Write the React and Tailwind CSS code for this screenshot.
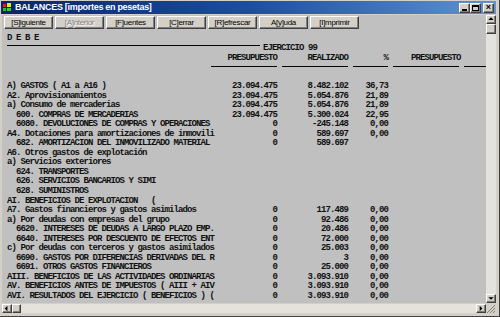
import React from 'react';

const rows = [
  ['A) GASTOS ( A1 a A16 )', '23.094.475', '8.482.102', '36,73'],
  ['A2. Aprovisionamientos', '23.094.475', '5.054.876', '21,89'],
  ['a) Consumo de mercaderias', '23.094.475', '5.054.876', '21,89'],
  ['  600. COMPRAS DE MERCADERIAS', '23.094.475', '5.300.024', '22,95'],
  ['  6080. DEVOLUCIONES DE COMPRAS Y OPERACIONES', '0', '-245.148', '0,00'],
  ['A4. Dotaciones para amortizaciones de inmovili', '0', '589.697', '0,00'],
  ['  682. AMORTIZACION DEL INMOVILIZADO MATERIAL', '0', '589.697', ''],
  ['A6. Otros gastos de explotación', '', '', ''],
  ['a) Servicios exteriores', '', '', ''],
  ['  624. TRANSPORTES', '', '', ''],
  ['  626. SERVICIOS BANCARIOS Y SIMI', '', '', ''],
  ['  628. SUMINISTROS', '', '', ''],
  ['AI. BENEFICIOS DE EXPLOTACION   (', '', '', ''],
  ['A7. Gastos financieros y gastos asimilados', '0', '117.489', '0,00'],
  ['a) Por deudas con empresas del grupo', '0', '92.486', '0,00'],
  ['  6620. INTERESES DE DEUDAS A LARGO PLAZO EMP.', '0', '20.486', '0,00'],
  ['  6640. INTERESES POR DESCUENTO DE EFECTOS ENT', '0', '72.000', '0,00'],
  ['c) Por deudas con terceros y gastos asimilados', '0', '25.003', '0,00'],
  ['  6690. GASTOS POR DIFERENCIAS DERIVADAS DEL R', '0', '3', '0,00'],
  ['  6691. OTROS GASTOS FINANCIEROS', '0', '25.000', '0,00'],
  ['AIII. BENEFICIOS DE LAS ACTIVIDADES ORDINARIAS', '0', '3.093.910', '0,00'],
  ['AV. BENEFICIOS ANTES DE IMPUESTOS ( AIII + AIV', '0', '3.093.910', '0,00'],
  ['AVI. RESULTADOS DEL EJERCICIO ( BENEFICIOS ) (', '0', '3.093.910', '0,00'],
];

const buttons = [
  { label: '[S]iguiente' },
  { label: '[A]nterior', disabled: true },
  { label: '[F]uentes' },
  { label: '[C]errar' },
  { label: '[R]efrescar' },
  { label: 'A[y]uda' },
  { label: '[I]mprimir' },
];

const bevel =
  'bg-[#d4d0c8] border border-t-white border-l-white border-r-[#404040] border-b-[#404040] shadow-[inset_-1px_-1px_0_#808080]';

const Arrow = ({ dir }) => {
  const pts = {
    up: '1.5,5 4.5,2 7.5,5',
    down: '1.5,3 4.5,6 7.5,3',
    left: '5,1.5 2,4.5 5,7.5',
    right: '3,1.5 6,4.5 3,7.5',
  };
  return (
    <svg width="9" height="9" viewBox="0 0 9 9">
      <polygon points={pts[dir]} fill="#000" />
    </svg>
  );
};

const ScrollBtn = ({ dir, className = '' }) => (
  <div className={`${bevel} flex items-center justify-center ${className}`}>
    <Arrow dir={dir} />
  </div>
);

const WinBtn = ({ children }) => (
  <div className={`${bevel} w-[11px] h-[10px] flex items-center justify-center`}>{children}</div>
);

const Row = ({ label, a, b, c }) => (
  <div className="flex h-[9.55px] leading-[9.55px] whitespace-pre">
    <div className="w-[204px] shrink-0">{label}</div>
    <div className="w-[66px] shrink-0 text-right">{a}</div>
    <div className="w-[66px] shrink-0 ml-[5px] text-right">{b}</div>
    <div className="w-[35px] shrink-0 ml-[5px] text-right">{c}</div>
  </div>
);

export default function App() {
  return (
    <div className="w-[500px] h-[317px] bg-[#d4d0c8] flex flex-col pl-[2px] pt-[1px] pr-[3px] pb-[3px] border-r border-b border-[#404040] overflow-hidden">
      {/* title bar */}
      <div className="h-[13px] shrink-0 flex items-center bg-gradient-to-r from-[#0a246a] via-[#1d4e9e] to-[#5f93d4] -ml-[1px] pl-[2px] pr-[2px]">
        <svg width="9" height="9" viewBox="0 0 9 9" className="shrink-0">
          <rect x="0" y="1" width="3" height="3" fill="#e02020" />
          <rect x="0" y="5" width="3" height="3" fill="#20c020" />
          <rect x="4" y="0" width="4" height="4" fill="#f0e020" />
          <rect x="4" y="5" width="4" height="3" fill="#30d030" />
        </svg>
        <span className="ml-[3px] text-white font-bold text-[9px] tracking-[-0.3px] leading-none" style={{ fontFamily: '"Liberation Sans", Arial, sans-serif' }}>
          BALANCES [importes en pesetas]
        </span>
        <div className="ml-auto flex items-center">
          <WinBtn>
            <div className="w-[5px] h-[2px] bg-black mt-[4px]" />
          </WinBtn>
          <WinBtn>
            <div className="w-[7px] h-[6px] border border-black border-t-2" />
          </WinBtn>
          <div className="w-[2px]" />
          <WinBtn>
            <span className="text-[9px] font-bold leading-none text-black" style={{ fontFamily: '"Liberation Sans", Arial, sans-serif' }}>×</span>
          </WinBtn>
        </div>
      </div>

      {/* client area */}
      <div className="flex-1 flex min-h-0 mt-[1px]">
        <div className="flex-1 flex flex-col bg-[#c0c0c0] min-w-0 overflow-hidden">
          {/* toolbar */}
          <div className="h-[15px] shrink-0 flex items-start gap-[2px] pl-[2px] pt-[1px]" style={{ fontFamily: '"Liberation Sans", Arial, sans-serif' }}>
            {buttons.map((btn) => (
              <div
                key={btn.label}
                className={`${bevel} w-[49px] h-[13px] flex items-center justify-center text-[8px] tracking-[-0.3px] leading-none ${
                  btn.disabled ? 'text-[#808080] [text-shadow:1px_1px_0_#fff]' : 'text-black'
                }`}
              >
                {btn.label}
              </div>
            ))}
          </div>

          {/* report */}
          <div
            className="flex-1 pl-[5px] text-[9px] font-bold tracking-[-0.9px] text-[#111] overflow-hidden"
            style={{ fontFamily: '"Liberation Mono", "Courier New", monospace' }}
          >
            <div className="mt-[3.5px] h-[9.5px] leading-[9.5px] whitespace-pre">D E B E</div>
            <div className="flex items-start h-[9.5px] leading-[9.5px] whitespace-pre">
              <div className="w-[253px] h-px bg-black mt-[1.5px] shrink-0" />
              <div className="ml-[3px] mt-[1px]">EJERCICIO 99</div>
            </div>
            <div className="flex mt-[1px] h-[9.5px] leading-[9.5px] whitespace-pre">
              <div className="w-[204px] shrink-0" />
              <div className="w-[66px] shrink-0 text-right">PRESUPUESTO</div>
              <div className="w-[66px] shrink-0 ml-[5px] text-right">REALIZADO</div>
              <div className="w-[35px] shrink-0 ml-[5px] text-right">%</div>
              <div className="w-[66px] shrink-0 ml-[5px] pl-[18px]">PRESUPUESTO</div>
            </div>
            <div className="flex mt-[3px]">
              <div className="w-[204px] shrink-0" />
              <div className="w-[66px] h-px bg-black shrink-0" />
              <div className="w-[66px] h-px bg-black shrink-0 ml-[5px]" />
              <div className="w-[35px] h-px bg-black shrink-0 ml-[5px]" />
              <div className="w-[66px] h-px bg-black shrink-0 ml-[5px]" />
              <div className="w-[66px] h-px bg-black shrink-0 ml-[5px]" />
            </div>
            <div className="mt-[15px]">
              {rows.map(([label, a, b, c], i) => (
                <Row key={i} label={label} a={a} b={b} c={c} />
              ))}
            </div>
          </div>
        </div>

        {/* vertical scrollbar */}
        <div className="w-[10px] shrink-0 flex flex-col bg-[#e4e2dc]">
          <ScrollBtn dir="up" className="h-[9px]" />
          <div className={`${bevel} h-[10px]`} />
          <div className="flex-1" />
          <ScrollBtn dir="down" className="h-[9px]" />
        </div>
      </div>

      {/* horizontal scrollbar */}
      <div className="h-[9px] shrink-0 flex bg-[#e4e2dc] mt-[1px]">
        <ScrollBtn dir="left" className="w-[10px]" />
        <div className={`${bevel} w-[9px]`} />
        <div className="flex-1" />
        <ScrollBtn dir="right" className="w-[10px]" />
        <div className="w-[10px] bg-[#d4d0c8] relative overflow-hidden">
          <svg width="10" height="9" viewBox="0 0 10 9" className="absolute right-0 bottom-0">
            <line x1="9" y1="1" x2="1" y2="9" stroke="#808080" />
            <line x1="9" y1="4" x2="4" y2="9" stroke="#808080" />
            <line x1="9" y1="7" x2="7" y2="9" stroke="#808080" />
          </svg>
        </div>
      </div>
    </div>
  );
}
